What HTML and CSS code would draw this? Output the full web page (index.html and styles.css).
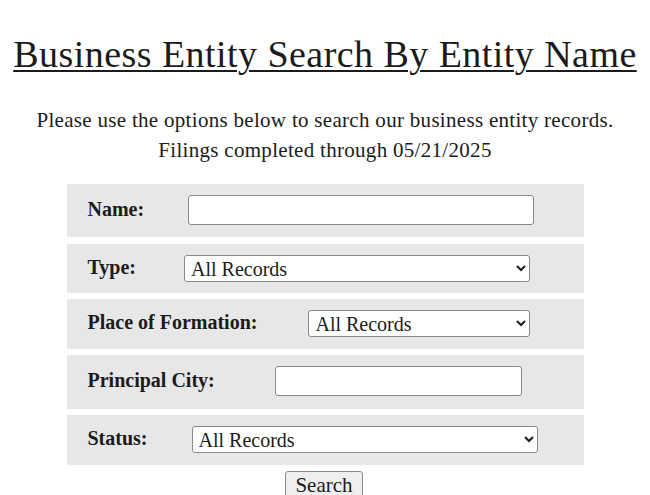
FILE: index.html
```html
<!DOCTYPE html>
<html lang="en">
<head>
<meta charset="utf-8">
<title>Business Entity Search By Entity Name</title>
<link rel="stylesheet" href="styles.css">
</head>
<body>
<h1 class="title">Business Entity Search By Entity Name</h1>
<p class="intro">Please use the options below to search our business entity records.<br>Filings completed through 05/21/2025</p>
<form class="search-form">
  <div class="row row-first">
    <label class="label" for="name">Name:</label>
    <input class="text-input name-input" id="name" type="text">
  </div>
  <div class="row row-compact">
    <label class="label" for="type">Type:</label>
    <select class="select type-select" id="type"><option>All Records</option></select>
  </div>
  <div class="row">
    <label class="label" for="place">Place of Formation:</label>
    <select class="select place-select" id="place"><option>All Records</option></select>
  </div>
  <div class="row row-tall">
    <label class="label" for="city">Principal City:</label>
    <input class="text-input city-input" id="city" type="text">
  </div>
  <div class="row">
    <label class="label" for="status">Status:</label>
    <select class="select status-select" id="status"><option>All Records</option></select>
  </div>
  <div class="actions">
    <button class="search-btn" type="button">Search</button>
  </div>
</form>
</body>
</html>
```
FILE: styles.css
```css
html, body {
  margin: 0;
  padding: 0;
  background: #ffffff;
}
body {
  padding: 8px;
  font-family: "Liberation Serif", "Times New Roman", serif;
  color: #1b1b1b;
}
.title {
  margin: 24px 0 0;
  text-align: center;
  font-size: 38px;
  letter-spacing: 0.45px;
  font-weight: normal;
  line-height: 44px;
  text-decoration: underline;
  text-decoration-thickness: 2px;
  text-underline-offset: 3px;
}
.intro {
  margin: 29px 0 0;
  text-align: center;
  font-size: 21px;
  letter-spacing: 0.3px;
  line-height: 30px;
}
.search-form {
  width: 517px;
  margin: 19px auto 0;
}
.row {
  display: flex;
  align-items: center;
  background: #e7e7e7;
  padding: 11px 21px 12px 21px;
  margin-bottom: 6px;
}
.row-first {
  margin-bottom: 7px;
}
.row-compact {
  padding-bottom: 11px;
}
.row-tall {
  padding-bottom: 13px;
}
.label {
  font-weight: bold;
  font-size: 20px;
  line-height: 22px;
  padding-bottom: 3px;
}
.text-input {
  box-sizing: border-box;
  height: 30px;
  border: 1px solid #8a8a8a;
  border-radius: 3px;
  background: #fff;
  font-family: inherit;
  font-size: 18px;
  padding: 0 6px;
}
.select {
  box-sizing: border-box;
  height: 27px;
  border: 1px solid #8a8a8a;
  border-radius: 3px;
  background: #fff;
  font-family: "Liberation Serif", "Times New Roman", serif;
  font-size: 20px;
  color: #1b1b1b;
  padding: 0 0 0 2px;
}
.name-input { margin-left: 44px; width: 346px; }
.type-select { margin-left: 48px; width: 346px; }
.place-select { margin-left: 51px; width: 222px; }
.city-input { margin-left: 60px; width: 247px; }
.status-select { margin-left: 44px; width: 346px; }
.actions {
  display: flex;
  justify-content: center;
}
.search-btn {
  font-family: "Liberation Serif", "Times New Roman", serif;
  font-size: 21px;
  color: #1b1b1b;
  background: #efefef;
  border: 1px solid #8a8a8a;
  border-radius: 3px;
  padding: 1px 9px;
  margin-right: 2px;
}
```
